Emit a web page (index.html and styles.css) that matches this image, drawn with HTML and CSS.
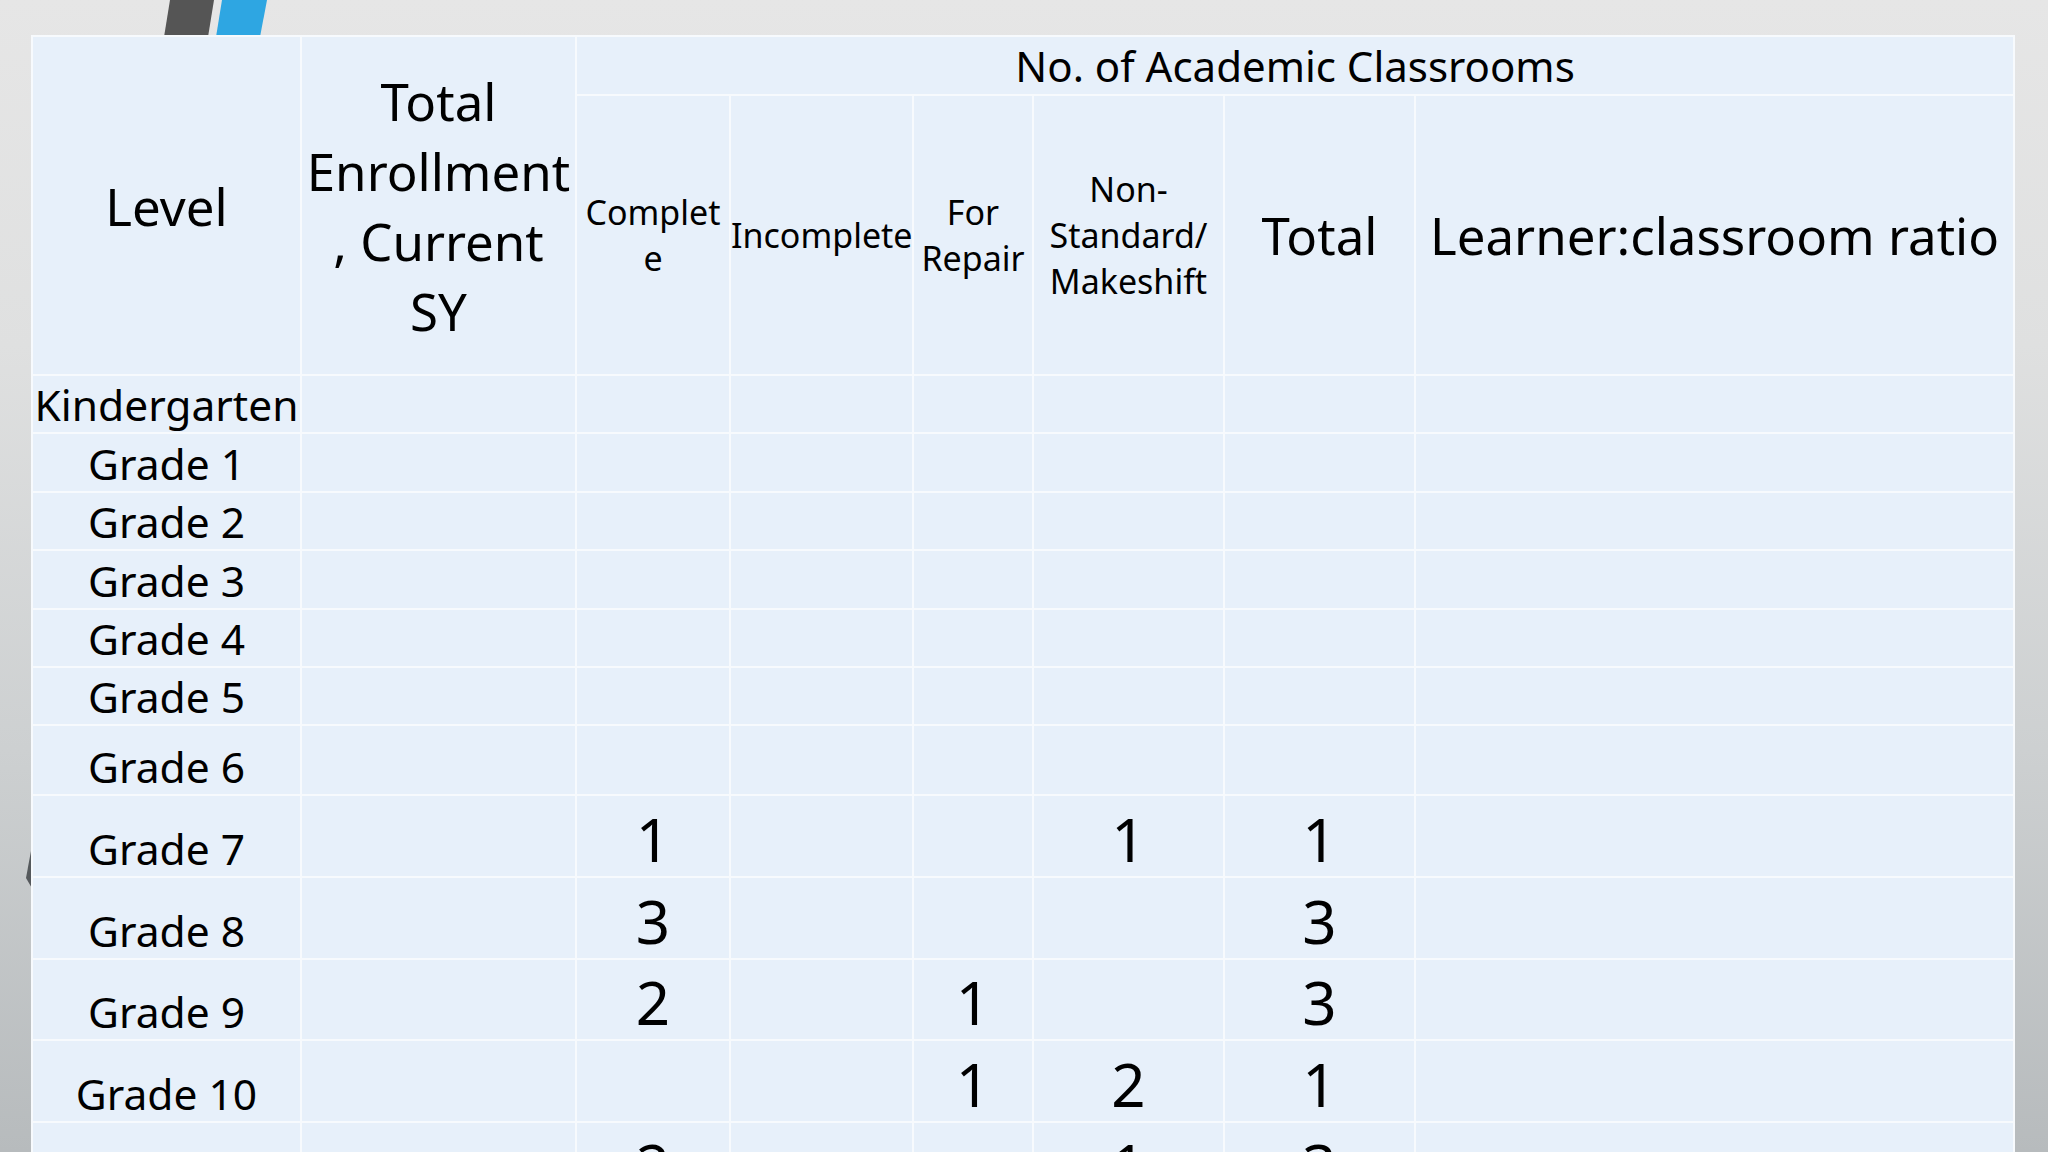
FILE: index.html
```html
<!DOCTYPE html>
<html lang="en">
<head>
<meta charset="utf-8">
<title>Academic Classrooms</title>
<link rel="stylesheet" href="styles.css">
</head>
<body>
<div class="slide">
  <svg class="deco-top" width="300" height="40" viewBox="0 0 300 40" aria-hidden="true">
    <polygon points="170,0 214,0 208,37 164,37" fill="#555555"/>
    <polygon points="222,0 267,0 260,37 216,37" fill="#2ea6e2"/>
  </svg>
  <svg class="deco-left" width="40" height="60" viewBox="0 0 40 60" aria-hidden="true">
    <polygon points="33,0 33,50 26,38" fill="#55595c"/>
  </svg>
  <table class="grid">
    <colgroup>
      <col class="c-level">
      <col class="c-enrol">
      <col class="c-complete">
      <col class="c-incomplete">
      <col class="c-repair">
      <col class="c-nonstd">
      <col class="c-total">
      <col class="c-ratio">
    </colgroup>
    <thead>
      <tr class="h-top">
        <th rowspan="2" class="t-big">Level</th>
        <th rowspan="2" class="t-big">Total<br>Enrollment<br>, Current<br>SY</th>
        <th colspan="6" class="t-mid">No. of Academic Classrooms</th>
      </tr>
      <tr class="h-sub">
        <th class="t-small">Complet<br>e</th>
        <th class="t-small">Incomplete</th>
        <th class="t-small">For<br>Repair</th>
        <th class="t-small">Non-<br>Standard/<br>Makeshift</th>
        <th class="t-big">Total</th>
        <th class="t-big nowrap">Learner:classroom ratio</th>
      </tr>
    </thead>
    <tbody>
      <tr class="r-s"><td class="lbl">Kindergarten</td><td></td><td></td><td></td><td></td><td></td><td></td><td></td></tr>
      <tr class="r-s"><td class="lbl">Grade 1</td><td></td><td></td><td></td><td></td><td></td><td></td><td></td></tr>
      <tr class="r-s"><td class="lbl">Grade 2</td><td></td><td></td><td></td><td></td><td></td><td></td><td></td></tr>
      <tr class="r-s"><td class="lbl">Grade 3</td><td></td><td></td><td></td><td></td><td></td><td></td><td></td></tr>
      <tr class="r-s"><td class="lbl">Grade 4</td><td></td><td></td><td></td><td></td><td></td><td></td><td></td></tr>
      <tr class="r-s"><td class="lbl">Grade 5</td><td></td><td></td><td></td><td></td><td></td><td></td><td></td></tr>
      <tr class="r-m"><td class="lbl">Grade 6</td><td></td><td></td><td></td><td></td><td></td><td></td><td></td></tr>
      <tr class="r-l"><td class="lbl">Grade 7</td><td></td><td class="num">1</td><td></td><td></td><td class="num">1</td><td class="num">1</td><td></td></tr>
      <tr class="r-l"><td class="lbl">Grade 8</td><td></td><td class="num">3</td><td></td><td></td><td></td><td class="num">3</td><td></td></tr>
      <tr class="r-l"><td class="lbl">Grade 9</td><td></td><td class="num">2</td><td></td><td class="num">1</td><td></td><td class="num">3</td><td></td></tr>
      <tr class="r-l"><td class="lbl">Grade 10</td><td></td><td></td><td></td><td class="num">1</td><td class="num">2</td><td class="num">1</td><td></td></tr>
      <tr class="r-l"><td class="lbl">Grade 11</td><td></td><td class="num">2</td><td></td><td></td><td class="num">1</td><td class="num">3</td><td></td></tr>
    </tbody>
  </table>
</div>
</body>
</html>
```

FILE: styles.css
```css
html, body {
  margin: 0;
  padding: 0;
  width: 2048px;
  height: 1152px;
  overflow: hidden;
}

body {
  font-family: "Noto Sans", "Open Sans", sans-serif;
  color: #000;
  background: linear-gradient(180deg, #e6e6e6 0%, #dfe0e0 30%, #cdd0d1 65%, #b7bbbd 100%);
}

.slide {
  position: relative;
  width: 2048px;
  height: 1152px;
  padding: 35px 0 0 31px;
  box-sizing: border-box;
}

.deco-top {
  position: absolute;
  left: 0;
  top: 0;
}

.deco-left {
  position: absolute;
  left: 0;
  top: 840px;
}

.grid {
  position: relative;
  border-collapse: collapse;
  table-layout: fixed;
  width: 1982px;
  background: #e7f0fa;
}

.c-level { width: 269px; }
.c-enrol { width: 275px; }
.c-complete { width: 154px; }
.c-incomplete { width: 183px; }
.c-repair { width: 120px; }
.c-nonstd { width: 191px; }
.c-total { width: 191px; }
.c-ratio { width: 599px; }

.grid th,
.grid td {
  border: 2px solid #f7fafd;
  padding: 0;
  text-align: center;
  font-weight: 400;
  line-height: normal;
}

.grid th {
  vertical-align: middle;
}

.h-top { height: 59px; }
.h-sub { height: 280px; }

.t-big { font-size: 51px; }
.t-mid { font-size: 42px; }
.t-small { font-size: 34px; }
.nowrap { white-space: nowrap; }

.r-s { height: 58.4px; }
.r-m { height: 70px; }
.r-l { height: 81.6px; }

.grid td {
  vertical-align: bottom;
}

.grid td.lbl {
  font-size: 42.5px;
  line-height: 50px;
  padding-bottom: 2px;
  white-space: nowrap;
}

.grid td.num {
  font-size: 60px;
  line-height: 70px;
  padding-bottom: 2px;
}
```
